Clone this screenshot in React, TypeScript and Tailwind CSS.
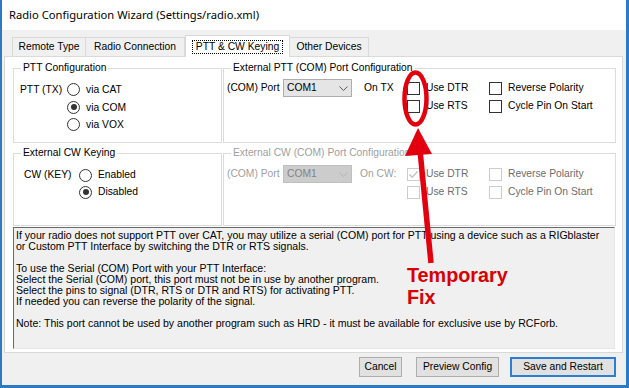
import { ReactNode } from "react"

const RED = "#e2000e"

const Radio = ({ label, checked }: { label: string; checked?: boolean }) => (
  <div className="flex items-center h-[17.5px]">
    <span className="w-[13px] h-[13px] rounded-full border border-[#333333] bg-white flex items-center justify-center">
      {checked && <span className="w-[6px] h-[6px] rounded-full bg-[#333333]" />}
    </span>
    <span className="ml-[6px]">{label}</span>
  </div>
)

const Check = ({ label, checked, disabled }: { label: string; checked?: boolean; disabled?: boolean }) => (
  <div className="flex items-center h-[18px]">
    <span
      className={
        disabled
          ? "w-[13px] h-[13px] border border-[#cccccc] bg-white flex items-center justify-center"
          : "w-[13px] h-[13px] border border-[#333333] bg-white flex items-center justify-center"
      }
    >
      {checked && (
        <svg width="11" height="11" viewBox="0 0 11 11">
          <polyline points="1.5,5.5 4.2,8.2 9.5,2.5" fill="none" stroke="#c4c4c4" strokeWidth="1.4" />
        </svg>
      )}
    </span>
    <span className={disabled ? "ml-[6px] text-[#6d6d6d]" : "ml-[6px]"}>{label}</span>
  </div>
)

const Combo = ({ disabled }: { disabled?: boolean }) => (
  <div
    className={
      disabled
        ? "w-[69px] h-[18px] border border-[#bfbfbf] bg-[#cccccc] text-[#838383] flex items-center justify-between pl-[3px] pr-[3px]"
        : "w-[69px] h-[18px] border border-[#adadad] bg-[#e5e5e5] flex items-center justify-between pl-[3px] pr-[3px]"
    }
  >
    <span>COM1</span>
    <svg width="9" height="5" viewBox="0 0 9 5">
      <polyline points="0.5,0.5 4.5,4.5 8.5,0.5" fill="none" stroke={disabled ? "#b4b4b4" : "#5a5a5a"} strokeWidth="1" />
    </svg>
  </div>
)

const Group = ({ title, disabled, className, children }: { title: string; disabled?: boolean; className: string; children: ReactNode }) => (
  <fieldset className={`border border-[#dcdcdc] ${className}`}>
    <legend className={disabled ? "ml-[7px] px-[2px] leading-[12px] text-[#a0a0a0]" : "ml-[7px] px-[2px] leading-[12px]"}>
      {title}
    </legend>
    {children}
  </fieldset>
)

const Button = ({ label, width, primary }: { label: string; width: string; primary?: boolean }) => (
  <div
    className={
      primary
        ? `${width} h-[20px] border-2 border-[#2b7fd3] bg-[#e1e1e1] flex items-center justify-center`
        : `${width} h-[20px] border border-[#adadad] bg-[#e1e1e1] flex items-center justify-center`
    }
  >
    {label}
  </div>
)

const helpLines = [
  "If your radio does not support PTT over CAT, you may utilize a serial (COM) port for PTT using a device such as a RIGblaster",
  "or Custom PTT Interface by switching the DTR or RTS signals.",
  "",
  "To use the Serial (COM) Port with your PTT Interface:",
  "Select the Serial (COM) port, this port must not be in use by another program.",
  "Select the pins to signal (DTR, RTS or DTR and RTS) for activating PTT.",
  "If needed you can reverse the polarity of the signal.",
  "",
  "Note: This port cannot be used by another program such as HRD - it must be available for exclusive use by RCForb.",
]

export default function App() {
  return (
    <div className="relative w-[629px] h-[388px] overflow-hidden font-['Liberation_Sans',Arial,sans-serif] text-[10.3px] text-black">
      <div className="w-full h-full bg-[#f0f0f0] border-l-2 border-r-[3px] border-b-[3px] border-[#2b7ac3] flex flex-col">
        {/* title bar */}
        <div className="h-[30px] bg-white flex items-center pl-[7px] font-['Noto_Sans',sans-serif] text-[11.2px]">
          Radio Configuration Wizard (Settings/radio.xml)
        </div>

        {/* tabs */}
        <div className="ml-[2px] mt-[5px] h-[21px] flex items-end pl-[8px]">
          <div className="w-[74px] h-[19px] border border-b-0 border-[#d9d9d9] bg-[#f0f0f0] flex items-center justify-center">Remote Type</div>
          <div className="w-[99px] h-[19px] border-t border-r border-[#d9d9d9] bg-[#f0f0f0] flex items-center justify-center">Radio Connection</div>
          <div className="relative z-10 w-[105px] h-[22px] -mb-px border border-b-0 border-[#d9d9d9] bg-white flex items-center justify-center">
            <span className="border border-dotted border-black px-[3px] leading-[12px]">PTT &amp; CW Keying</span>
          </div>
          <div className="w-[79px] h-[19px] border-t border-r border-[#d9d9d9] bg-[#f0f0f0] flex items-center justify-center">Other Devices</div>
        </div>

        {/* tab page */}
        <div className="ml-[2px] w-[619px] h-[297px] border border-[#d9d9d9] bg-white pl-[8px] pt-[5px]">
          <div className="flex gap-[1px]">
            <Group title="PTT Configuration" className="w-[209px] h-[81px]">
              <div className="flex pl-[6px] pt-[7px]">
                <div className="w-[47px] h-[17.5px] flex items-center">PTT (TX)</div>
                <div className="flex flex-col">
                  <Radio label="via CAT" />
                  <Radio label="via COM" checked />
                  <Radio label="via VOX" />
                </div>
              </div>
            </Group>
            <Group title="External PTT (COM) Port Configuration" className="w-[393px] h-[81px]">
              <div className="flex items-start pl-[3px] pt-[5px]">
                <div className="w-[56px] h-[18px] flex items-center">(COM) Port</div>
                <Combo />
                <div className="ml-[12px] w-[43px] h-[18px] flex items-center">On TX</div>
                <div className="w-[82px] flex flex-col">
                  <Check label="Use DTR" />
                  <Check label="Use RTS" />
                </div>
                <div className="flex flex-col">
                  <Check label="Reverse Polarity" />
                  <Check label="Cycle Pin On Start" />
                </div>
              </div>
            </Group>
          </div>

          <div className="flex gap-[1px] mt-[4px]">
            <Group title="External CW Keying" className="w-[209px] h-[79px]">
              <div className="flex pl-[10px] pt-[7.5px]">
                <div className="w-[55px] h-[17px] flex items-center">CW (KEY)</div>
                <div className="flex flex-col">
                  <div className="h-[17px] flex items-center">
                    <Radio label="Enabled" />
                  </div>
                  <div className="h-[17px] flex items-center">
                    <Radio label="Disabled" checked />
                  </div>
                </div>
              </div>
            </Group>
            <Group title="External CW (COM) Port Configuration" disabled className="w-[393px] h-[79px]">
              <div className="flex items-start pl-[3px] pt-[6px] text-[#a0a0a0]">
                <div className="w-[56px] h-[18px] flex items-center">(COM) Port</div>
                <Combo disabled />
                <div className="ml-[8px] w-[47px] h-[18px] flex items-center">On CW:</div>
                <div className="w-[82px] flex flex-col">
                  <Check label="Use DTR" checked disabled />
                  <Check label="Use RTS" disabled />
                </div>
                <div className="flex flex-col">
                  <Check label="Reverse Polarity" disabled />
                  <Check label="Cycle Pin On Start" disabled />
                </div>
              </div>
            </Group>
          </div>

          {/* read-only help text */}
          <div className="mt-[1px] w-[602px] h-[122px] border border-t-[#6b6b6b] border-l-[#6b6b6b] border-b-[#e6e6e6] border-r-[#e6e6e6] bg-[#f0f0f0] pl-[2px] pt-[2px] text-[10.55px] leading-[11px]">
            {helpLines.map((line, i) => (
              <div key={i} className="h-[11px] whitespace-nowrap">
                {line}
              </div>
            ))}
          </div>
        </div>

        {/* buttons */}
        <div className="mt-[4px] flex justify-end pr-[10px]">
          <Button label="Cancel" width="w-[43px]" />
          <div className="w-[14px]" />
          <Button label="Preview Config" width="w-[83px]" />
          <div className="w-[11px]" />
          <Button label="Save and Restart" width="w-[106px]" primary />
        </div>
      </div>

      {/* red annotation drawn over the dialog */}
      <svg className="absolute inset-0 pointer-events-none" width="629" height="388" viewBox="0 0 629 388">
        <ellipse cx="415.5" cy="98.5" rx="11" ry="26" fill="none" stroke={RED} strokeWidth="4.5" />
        <line x1="420" y1="150" x2="431" y2="263" stroke={RED} strokeWidth="5.5" />
        <polygon points="418,128 405,156 432,154" fill={RED} />
      </svg>
      <div className="absolute left-[407px] top-[264px] text-[19.8px] leading-[22px] font-bold text-[#d80000]">
        Temporary
        <br />
        Fix
      </div>
    </div>
  )
}
